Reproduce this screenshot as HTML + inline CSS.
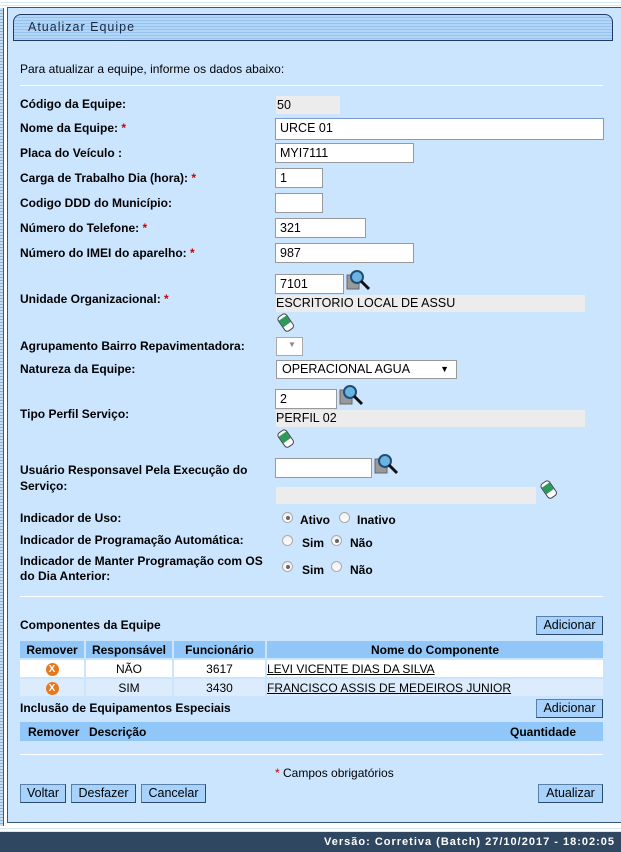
<!DOCTYPE html><html><head><meta charset="utf-8"><style>
*{margin:0;padding:0;box-sizing:border-box}
body{width:621px;height:852px;position:relative;background:#fff;font-family:"Liberation Sans",Arial,sans-serif;font-size:12px;color:#000;overflow:hidden}
.a{position:absolute}
.lb{position:absolute;left:20px;font-weight:bold;font-size:12px}
.r{color:#c00}
.in{position:absolute;background:#fff;border:1px solid #999;font-size:12.5px;padding:2px 4px;height:20px}
.gr{position:absolute;background:#ececec;font-size:12.5px;padding:0 0 0 0}
.btn{position:absolute;background:#a7d2fb;border:1px solid #5a7fa8;border-right-color:#2c4a6c;border-bottom-color:#2c4a6c;font-size:12.5px;height:19px;line-height:16px;text-align:center}
.rad{position:absolute;width:11px;height:11px;border-radius:50%;border:1px solid #aaa;background:linear-gradient(#eee,#fff)}
.rad.on::after{content:"";position:absolute;left:2.5px;top:2.5px;width:4px;height:4px;border-radius:50%;background:#666}
table{position:absolute;border-collapse:separate;border-spacing:2px;font-size:12px}
</style></head><body>
<div class="a" style="left:0;top:0;width:621px;height:8px;background:repeating-linear-gradient(#fff 0 2px,#d5e6f5 2px 3px)"></div>
<div class="a" style="left:0;top:8px;width:4px;height:818px;background:repeating-linear-gradient(#c9ddf0 0 2px,#8fb1d6 2px 3px);border-right:1px solid #3c5a80"></div>
<div class="a" style="left:7px;top:7px;width:614px;height:816px;background:#cce5ff;border:1px solid #3b5575;border-right:none"></div>
<div class="a" style="left:13px;top:14px;width:600px;height:27px;border:1px solid #1f3b63;border-radius:8px 8px 0 0;background:repeating-linear-gradient(#b3d6f8 0 2px,#95c3ef 2px 3px)"></div>
<div class="a" style="left:28px;top:20px;font-size:12.5px;letter-spacing:1px;color:#1a2a40">Atualizar Equipe</div>
<div class="a" style="left:20px;top:62px;font-size:12px">Para atualizar a equipe, informe os dados abaixo:</div>
<div class="a" style="left:20px;top:85px;width:583px;height:1px;background:#999;border-bottom:1px solid #fff"></div>

<div class="lb" style="top:97px">Código da Equipe:</div>
<div class="gr" style="left:276px;top:96px;width:64px;height:18px;padding-left:1px;line-height:18px">50</div>
<div class="lb" style="top:121px">Nome da Equipe: <span class="r">*</span></div>
<div class="in" style="left:275px;top:118px;width:329px;height:22px;border-color:#7a9cc8">URCE 01</div>
<div class="lb" style="top:146px">Placa do Veículo :</div>
<div class="in" style="left:275px;top:143px;width:139px">MYI7111</div>
<div class="lb" style="top:171px">Carga de Trabalho Dia (hora): <span class="r">*</span></div>
<div class="in" style="left:275px;top:168px;width:48px">1</div>
<div class="lb" style="top:196px">Codigo DDD do Município:</div>
<div class="in" style="left:275px;top:193px;width:48px"></div>
<div class="lb" style="top:221px">Número do Telefone: <span class="r">*</span></div>
<div class="in" style="left:275px;top:218px;width:91px">321</div>
<div class="lb" style="top:246px">Número do IMEI do aparelho: <span class="r">*</span></div>
<div class="in" style="left:275px;top:243px;width:139px">987</div>

<div class="lb" style="top:292px">Unidade Organizacional: <span class="r">*</span></div>
<div class="in" style="left:275px;top:274px;width:69px">7101</div>
<svg class="a" style="left:346px;top:269px" width="26" height="24"><rect x="1" y="6" width="12" height="14" fill="#999" stroke="#666"/><circle cx="11" cy="8" r="6" fill="#6cb4e0" stroke="#1d4f7a" stroke-width="2"/><line x1="15" y1="12" x2="23" y2="20" stroke="#111" stroke-width="3"/></svg>
<div class="gr" style="left:276px;top:295px;width:309px;height:17px;line-height:16px">ESCRITORIO LOCAL DE ASSU</div>
<svg class="a" style="left:277px;top:313px" width="18" height="19"><g transform="rotate(-35 9 10)"><rect x="4" y="1" width="10" height="17" rx="3" fill="#fff" stroke="#444"/><rect x="4.5" y="4" width="9" height="8" fill="#2d9a5c"/></g></svg>

<div class="lb" style="top:339px">Agrupamento Bairro Repavimentadora:</div>
<div class="in" style="left:276px;top:337px;width:27px;height:19px;border-color:#aaa"><span style="position:absolute;left:11px;top:2px;font-size:8px;color:#888">▼</span></div>
<div class="lb" style="top:362px">Natureza da Equipe:</div>
<div class="in" style="left:276px;top:360px;width:181px;height:19px;padding:1px 5px">OPERACIONAL AGUA<span style="position:absolute;right:7px;top:3px;font-size:9px">▼</span></div>

<div class="lb" style="top:407px">Tipo Perfil Serviço:</div>
<div class="in" style="left:275px;top:389px;width:62px">2</div>
<svg class="a" style="left:339px;top:384px" width="26" height="24"><rect x="1" y="6" width="12" height="14" fill="#999" stroke="#666"/><circle cx="11" cy="8" r="6" fill="#6cb4e0" stroke="#1d4f7a" stroke-width="2"/><line x1="15" y1="12" x2="23" y2="20" stroke="#111" stroke-width="3"/></svg>
<div class="gr" style="left:276px;top:410px;width:309px;height:17px;line-height:16px">PERFIL 02</div>
<svg class="a" style="left:277px;top:429px" width="18" height="19"><g transform="rotate(-35 9 10)"><rect x="4" y="1" width="10" height="17" rx="3" fill="#fff" stroke="#444"/><rect x="4.5" y="4" width="9" height="8" fill="#2d9a5c"/></g></svg>

<div class="lb" style="top:462px;line-height:16px">Usuário Responsavel Pela Execução do<br>Serviço:</div>
<div class="in" style="left:275px;top:458px;width:97px"></div>
<svg class="a" style="left:374px;top:453px" width="26" height="24"><rect x="1" y="6" width="12" height="14" fill="#999" stroke="#666"/><circle cx="11" cy="8" r="6" fill="#6cb4e0" stroke="#1d4f7a" stroke-width="2"/><line x1="15" y1="12" x2="23" y2="20" stroke="#111" stroke-width="3"/></svg>
<div class="gr" style="left:276px;top:487px;width:260px;height:17px"></div>
<svg class="a" style="left:540px;top:480px" width="18" height="19"><g transform="rotate(-35 9 10)"><rect x="4" y="1" width="10" height="17" rx="3" fill="#fff" stroke="#444"/><rect x="4.5" y="4" width="9" height="8" fill="#2d9a5c"/></g></svg>

<div class="lb" style="top:511px">Indicador de Uso:</div>
<div class="rad on" style="left:282px;top:512px"></div><div class="a" style="left:300px;top:513px;font-weight:bold">Ativo</div>
<div class="rad" style="left:339px;top:512px"></div><div class="a" style="left:357px;top:513px;font-weight:bold">Inativo</div>
<div class="lb" style="top:533px">Indicador de Programação Automática:</div>
<div class="rad" style="left:282px;top:535px"></div><div class="a" style="left:302px;top:536px;font-weight:bold">Sim</div>
<div class="rad on" style="left:331px;top:535px"></div><div class="a" style="left:350px;top:536px;font-weight:bold">Não</div>
<div class="lb" style="top:554px;line-height:15px">Indicador de Manter Programação com OS<br>do Dia Anterior:</div>
<div class="rad on" style="left:282px;top:561px"></div><div class="a" style="left:302px;top:563px;font-weight:bold">Sim</div>
<div class="rad" style="left:331px;top:561px"></div><div class="a" style="left:350px;top:563px;font-weight:bold">Não</div>

<div class="a" style="left:20px;top:596px;width:583px;height:1px;background:#999;border-bottom:1px solid #fff"></div>
<div class="lb" style="top:618px">Componentes da Equipe</div>
<div class="btn" style="left:536px;top:616px;width:67px">Adicionar</div>
<table style="left:18px;top:639px;width:587px">
<tr style="background:#90c6f8;font-weight:bold;height:17px;text-align:center"><td style="width:64px">Remover</td><td style="width:86px">Responsável</td><td style="width:91px">Funcionário</td><td>Nome do Componente</td></tr>
<tr style="background:#fff;height:17px;text-align:center"><td><span style="display:inline-block;width:13px;height:13px;border-radius:50%;background:#e8781e;color:#fff;font-size:10px;font-weight:bold;line-height:13px">X</span></td><td>NÃO</td><td>3617</td><td style="text-align:left;text-decoration:underline">LEVI VICENTE DIAS DA SILVA</td></tr>
<tr style="background:#cce5ff;height:17px;text-align:center;outline:none"><td style="background:#dcecfc"><span style="display:inline-block;width:13px;height:13px;border-radius:50%;background:#e8781e;color:#fff;font-size:10px;font-weight:bold;line-height:13px">X</span></td><td style="background:#dcecfc">SIM</td><td style="background:#dcecfc">3430</td><td style="text-align:left;text-decoration:underline;background:#dcecfc">FRANCISCO ASSIS DE MEDEIROS JUNIOR</td></tr>
</table>
<div class="lb" style="top:701px">Inclusão de Equipamentos Especiais</div>
<div class="btn" style="left:536px;top:699px;width:67px">Adicionar</div>
<div class="a" style="left:20px;top:722px;width:583px;height:19px;background:#90c6f8;font-weight:bold">
<span class="a" style="left:8px;top:3px">Remover</span><span class="a" style="left:69px;top:3px">Descrição</span><span class="a" style="left:490px;top:3px">Quantidade</span></div>
<div class="a" style="left:20px;top:754px;width:583px;height:1px;background:#999;border-bottom:1px solid #fff"></div>
<div class="a" style="left:275px;top:766px"><span class="r">*</span> Campos obrigatórios</div>
<div class="btn" style="left:20px;top:784px;width:46px">Voltar</div>
<div class="btn" style="left:71px;top:784px;width:65px">Desfazer</div>
<div class="btn" style="left:141px;top:784px;width:65px">Cancelar</div>
<div class="btn" style="left:538px;top:784px;width:65px">Atualizar</div>

<div class="a" style="left:0;top:826px;width:621px;height:6px;background:repeating-linear-gradient(#fff 0 2px,#d5e6f5 2px 3px)"></div>
<div class="a" style="left:0;top:832px;width:621px;height:20px;background:#2f4760;color:#fff;font-weight:bold;font-size:11px;letter-spacing:1px;text-align:right;padding:4px 6px 0 0">Versão: Corretiva (Batch) 27/10/2017 - 18:02:05</div>
</body></html>
